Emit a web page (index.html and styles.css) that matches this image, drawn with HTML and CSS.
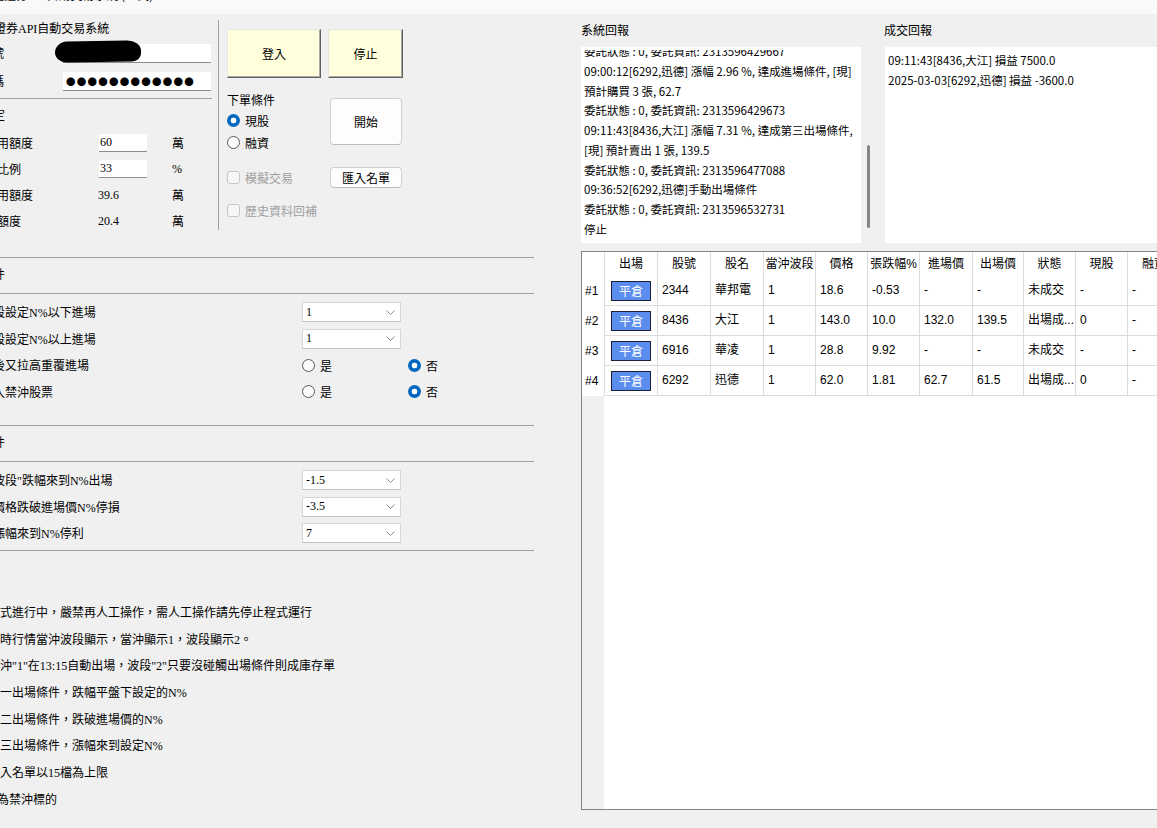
FILE: index.html
```html
<!DOCTYPE html>
<html lang="zh-Hant">
<head>
<meta charset="utf-8">
<title>證券API自動交易系統</title>
<link rel="stylesheet" href="styles.css">
</head>
<body>
<div class="titlebar"><span class="titlebar-text">群益證券API自動交易系統 (正式)</span></div>
<div class="main">
  <div class="left">
    <div class="top">
      <div class="acct ming">
        <div class="app-title">群益證券API自動交易系統</div>
        <div class="acct-row"><span class="acct-label">帳號</span><div class="textbox"><span class="scribble"></span></div></div>
        <div class="acct-row"><span class="acct-label">密碼</span><div class="textbox dots">●●●●●●●●●●●●</div></div>
        <div class="hline"></div>
        <div class="group-title">額度設定</div>
        <div class="quota">
          <span class="q-label">總可用額度</span><span class="numbox">60</span><span class="unit">萬</span>
          <span class="q-label">持股比例</span><span class="numbox">33</span><span class="unit">%</span>
          <span class="q-label">已使用額度</span><span class="num">39.6</span><span class="unit">萬</span>
          <span class="q-label">剩餘額度</span><span class="num">20.4</span><span class="unit">萬</span>
        </div>
      </div>
      <div class="vline"></div>
      <div class="ctrl">
        <div class="btn-row">
          <div class="btn3d login">登入</div>
          <div class="btn3d stop">停止</div>
        </div>
        <div class="order-row row-a">
          <div class="col1">
            <div class="cond-title">下單條件</div>
            <div class="choice"><span class="radio on"></span>現股</div>
            <div class="choice"><span class="radio"></span>融資</div>
          </div>
          <div class="btn-flat start">開始</div>
        </div>
        <div class="order-row row-b">
          <div class="col1 choice disabled"><span class="check"></span>模擬交易</div>
          <div class="btn-flat import">匯入名單</div>
        </div>
        <div class="order-row row-c">
          <div class="col1 choice disabled"><span class="check"></span>歷史資料回補</div>
        </div>
      </div>
    </div>

    <section class="sect ming">
      <div class="sect-head"><span>進場條件</span></div>
      <div class="sect-rows">
        <div class="opt-row">
          <span class="opt-label">波段設定N%以下進場</span>
          <div class="select"><span>1</span><svg class="chev" width="9" height="5" viewBox="0 0 9 5"><path d="M0.5 0.5 L4.5 4.5 L8.5 0.5" fill="none" stroke="#8a8a8a" stroke-width="1"/></svg></div>
        </div>
        <div class="opt-row">
          <span class="opt-label">波段設定N%以上進場</span>
          <div class="select"><span>1</span><svg class="chev" width="9" height="5" viewBox="0 0 9 5"><path d="M0.5 0.5 L4.5 4.5 L8.5 0.5" fill="none" stroke="#8a8a8a" stroke-width="1"/></svg></div>
        </div>
        <div class="opt-row">
          <span class="opt-label">破後又拉高重覆進場</span>
          <div class="yn">
            <div class="choice"><span class="radio"></span>是</div>
            <div class="choice"><span class="radio on"></span>否</div>
          </div>
        </div>
        <div class="opt-row">
          <span class="opt-label">匯入禁沖股票</span>
          <div class="yn">
            <div class="choice"><span class="radio"></span>是</div>
            <div class="choice"><span class="radio on"></span>否</div>
          </div>
        </div>
      </div>
    </section>

    <section class="sect sect-exit ming">
      <div class="sect-head"><span>出場條件</span></div>
      <div class="sect-rows">
        <div class="opt-row">
          <span class="opt-label">當波段"跌幅來到N%出場</span>
          <div class="select"><span>-1.5</span><svg class="chev" width="9" height="5" viewBox="0 0 9 5"><path d="M0.5 0.5 L4.5 4.5 L8.5 0.5" fill="none" stroke="#8a8a8a" stroke-width="1"/></svg></div>
        </div>
        <div class="opt-row">
          <span class="opt-label">當價格跌破進場價N%停損</span>
          <div class="select"><span>-3.5</span><svg class="chev" width="9" height="5" viewBox="0 0 9 5"><path d="M0.5 0.5 L4.5 4.5 L8.5 0.5" fill="none" stroke="#8a8a8a" stroke-width="1"/></svg></div>
        </div>
        <div class="opt-row">
          <span class="opt-label">當漲幅來到N%停利</span>
          <div class="select"><span>7</span><svg class="chev" width="9" height="5" viewBox="0 0 9 5"><path d="M0.5 0.5 L4.5 4.5 L8.5 0.5" fill="none" stroke="#8a8a8a" stroke-width="1"/></svg></div>
        </div>
      </div>
    </section>

    <div class="notes ming">
      <p>程式進行中，嚴禁再人工操作，需人工操作請先停止程式運行</p>
      <p>即時行情當沖波段顯示，當沖顯示1，波段顯示2。</p>
      <p>當沖"1"在13:15自動出場，波段"2"只要沒碰觸出場條件則成庫存單</p>
      <p>第一出場條件，跌幅平盤下設定的N%</p>
      <p>第二出場條件，跌破進場價的N%</p>
      <p>第三出場條件，漲幅來到設定N%</p>
      <p>匯入名單以15檔為上限</p>
      <p class="last">底為禁沖標的</p>
    </div>
  </div>

  <div class="right">
    <div class="reports">
      <div class="log-panel">
        <div class="panel-title">系統回報</div>
        <div class="log-body">
          <div class="logbox">
            <div class="log-clip">
              <div class="log-inner">
                <div>委託狀態 : 0, 委託資訊: 2313596429667</div>
                <div>09:00:12[6292,迅德] 漲幅 2.96 %, 達成進場條件, [現]</div>
                <div>預計購買 3 張, 62.7</div>
                <div>委託狀態 : 0, 委託資訊: 2313596429673</div>
                <div>09:11:43[8436,大江] 漲幅 7.31 %, 達成第三出場條件,</div>
                <div>[現] 預計賣出 1 張, 139.5</div>
                <div>委託狀態 : 0, 委託資訊: 2313596477088</div>
                <div>09:36:52[6292,迅德]手動出場條件</div>
                <div>委託狀態 : 0, 委託資訊: 2313596532731</div>
                <div>停止</div>
              </div>
            </div>
          </div>
          <div class="vscroll"><div class="thumb"></div></div>
        </div>
      </div>
      <div class="trade-panel">
        <div class="panel-title">成交回報</div>
        <div class="tradebox">
          <div>09:11:43[8436,大江] 損益 7500.0</div>
          <div>2025-03-03[6292,迅德] 損益 -3600.0</div>
        </div>
      </div>
    </div>

    <div class="grid">
      <div class="tr th">
        <div></div><div>出場</div><div>股號</div><div>股名</div><div>當沖波段</div><div>價格</div><div>張跌幅%</div><div>進場價</div><div>出場價</div><div>狀態</div><div>現股</div><div>融資</div>
      </div>
      <div class="tr row">
        <div class="rh">#1</div><div class="bc"><span class="close-btn">平倉</span></div><div>2344</div><div>華邦電</div><div>1</div><div>18.6</div><div>-0.53</div><div>-</div><div>-</div><div>未成交</div><div>-</div><div>-</div>
      </div>
      <div class="tr row">
        <div class="rh">#2</div><div class="bc"><span class="close-btn">平倉</span></div><div>8436</div><div>大江</div><div>1</div><div>143.0</div><div>10.0</div><div>132.0</div><div>139.5</div><div>出場成...</div><div>0</div><div>-</div>
      </div>
      <div class="tr row">
        <div class="rh">#3</div><div class="bc"><span class="close-btn">平倉</span></div><div>6916</div><div>華凌</div><div>1</div><div>28.8</div><div>9.92</div><div>-</div><div>-</div><div>未成交</div><div>-</div><div>-</div>
      </div>
      <div class="tr row">
        <div class="rh">#4</div><div class="bc"><span class="close-btn">平倉</span></div><div>6292</div><div>迅德</div><div>1</div><div>62.0</div><div>1.81</div><div>62.7</div><div>61.5</div><div>出場成...</div><div>0</div><div>-</div>
      </div>
    </div>
  </div>
</div>
</body>
</html>
```

FILE: styles.css
```css
* { box-sizing: border-box; margin: 0; padding: 0; }
html, body { width: 1157px; height: 828px; overflow: hidden; }
body {
  background: #f0f0f0;
  color: #000;
  font-family: "Noto Sans CJK TC", "Noto Sans", sans-serif;
  font-size: 12px;
}
.ming { font-family: "Liberation Serif", "Noto Sans CJK TC", serif; }

.titlebar { height: 14px; background: #f9f9f9; overflow: hidden; }
.titlebar-text { display: block; margin-top: -12px; margin-left: -20px; line-height: 14px; white-space: nowrap; }

.main { display: flex; align-items: flex-start; }
.left { flex: none; width: 598px; margin-left: -17px; }

/* top area */
.top { display: flex; height: 243px; }
.acct { flex: none; width: 229px; padding-top: 6px; }
.app-title { height: 19px; line-height: 19px; margin-left: -13px; white-space: nowrap; }
.acct-row { display: flex; align-items: center; height: 28px; }
.acct-label { flex: none; width: 80px; text-indent: -3px; white-space: nowrap; }
.textbox { position: relative; width: 148px; height: 19px; background: #fff; border-bottom: 1px solid #8c8c8c; }
.scribble {
  position: absolute; left: -8px; top: -3px; width: 86px; height: 21px;
  background: #000;
  border-radius: 12px 14px 9px 12px / 11px 10px 8px 10px;
  transform: rotate(-1deg);
}
.dots { font-family: "Noto Sans CJK TC", sans-serif; font-size: 9.5px; letter-spacing: 1.25px; line-height: 18px; padding-left: 3px; white-space: nowrap; }
.hline { height: 1px; background: #a0a0a0; margin-top: 3px; }
.group-title { height: 27px; line-height: 27px; margin-top: 4px; margin-left: -26px; white-space: nowrap; }
.quota { display: grid; grid-template-columns: 116px 73px 40px; grid-auto-rows: 26px; align-items: center; }
.q-label { margin-left: -10px; white-space: nowrap; }
.numbox { width: 48px; height: 18px; background: #fff; border-bottom: 1px solid #8c8c8c; padding-left: 1px; line-height: 17px; }
.num { margin-left: -1px; }

.vline { flex: none; width: 1px; height: 210px; background: #a0a0a0; margin-top: 6px; margin-left: 6px; }

.ctrl { flex: none; width: 180px; margin-left: 8px; padding-top: 15px; }
.btn-row { display: flex; gap: 7px; height: 49px; }
.btn3d {
  display: flex; align-items: center; justify-content: center;
  height: 49px; background: #ffffdc;
  border: 1px solid; border-color: #e6e6e6 #5f5f5f #5f5f5f #e6e6e6;
  box-shadow: inset -1px -1px 0 #a8a8a8;
}
.login { width: 94px; }
.stop { width: 75px; }
.order-row { display: flex; }
.row-a { margin-top: 12px; }
.row-b { margin-top: 7px; height: 34px; align-items: center; }
.row-c { height: 32px; align-items: center; }
.col1 { flex: none; width: 103px; }
.cond-title { height: 19px; line-height: 19px; }
.choice { display: flex; align-items: center; gap: 5px; height: 22px; white-space: nowrap; }
.disabled { color: #a0a0a0; }
.radio {
  flex: none; width: 13px; height: 13px; border-radius: 50%;
  border: 1px solid #5a5a5a; background: #fbfbfb;
}
.radio.on { border: none; background: radial-gradient(circle, #fff 0 2.6px, #0067c0 3.2px); }
.check { flex: none; width: 13px; height: 13px; border: 1px solid #c6c6c6; border-radius: 3px; background: #f6f6f6; }
.btn-flat {
  display: flex; align-items: center; justify-content: center;
  width: 72px; background: #fdfdfd; border: 1px solid #d0d0d0; border-bottom-color: #bcbcbc; border-radius: 4px;
}
.start { margin-top: 8px; height: 47px; }
.import { height: 21px; }

/* sections */
.sect { width: 551px; border-top: 1px solid #a0a0a0; padding-bottom: 20px; }
.sect-exit { padding-bottom: 3px; border-bottom: 1px solid #a0a0a0; }
.sect-head { height: 36px; line-height: 35px; border-bottom: 1px solid #a0a0a0; white-space: nowrap; }
.sect-head span { display: inline-block; margin-left: -26px; }
.sect-rows { padding-top: 5px; }
.opt-row { display: flex; align-items: center; height: 26.5px; }
.opt-label { flex: none; width: 321px; margin-left: -2px; white-space: nowrap; }
.select {
  display: flex; align-items: center; justify-content: space-between;
  width: 99px; height: 20px; background: #fff;
  border: 1px solid #d6d6d6; border-bottom-color: #c2c2c2;
  padding: 0 5px 0 3px;
}
.chev { display: block; }
.yn { display: flex; }
.yn .choice { width: 106px; font-family: "Noto Sans CJK TC", sans-serif; }

/* notes */
.notes { margin-top: 49.5px; margin-left: 5px; }
.notes p { height: 26.67px; line-height: 26.67px; white-space: nowrap; }
.notes p.last { margin-left: -3px; }

/* right side */
.right { flex: none; width: 640px; }
.reports { display: flex; height: 229px; }
.log-panel { flex: none; width: 303px; }
.panel-title { height: 33px; padding-top: 7px; line-height: 18px; white-space: nowrap; }
.log-body { display: flex; height: 196px; }
.logbox { flex: none; width: 280px; height: 196px; background: #fff; padding: 3px 0 0 3px; font-size: 11.5px; }
.log-clip { height: 190px; overflow: hidden; }
.log-inner { margin-top: -8px; line-height: 19.75px; white-space: nowrap; }
.vscroll { flex: none; width: 11px; padding: 98px 0 0 6px; }
.thumb { width: 3px; height: 83px; background: #858585; border-radius: 2px; }
.trade-panel { flex: 1; }
.tradebox { height: 196px; margin-left: 1px; background: #fff; padding: 3px 3px; line-height: 20px; white-space: nowrap; font-size: 11.5px; }

/* grid */
.grid {
  margin-top: 8px; height: 559px;
  border: 1px solid #848484; border-right: 0;
  background: linear-gradient(to right, #f0f0f0 22px, #fff 22px);
  font-family: "Liberation Sans", "Noto Sans CJK TC", sans-serif;
}
.tr { display: grid; grid-template-columns: 22px 53px 53px 53px 52px 52px 52px 53px 51px 52px 52px 53px; }
.th { height: 24px; }
.th > div { line-height: 24px; text-align: center; border-left: 1px solid #dcdcdc; background: #fff; white-space: nowrap; overflow: hidden; }
.th > div:first-child { border-left: 0; }
.row { height: 30px; }
.row > div {
  line-height: 29px; padding-left: 4px; background: #fff;
  border-left: 1px solid #dcdcdc; border-bottom: 1px solid #dcdcdc;
  white-space: nowrap; overflow: hidden;
}
.row > .rh { border: 0; padding-left: 3px; line-height: 30px; }
.row > .bc { display: flex; align-items: center; justify-content: center; padding: 0; }
.close-btn {
  display: block; width: 40px; height: 20px; line-height: 18px; text-align: center;
  background: #5b8def; border: 1px solid #1b1f33; color: #fff;
  font-family: "Noto Sans CJK TC", sans-serif;
}
```
